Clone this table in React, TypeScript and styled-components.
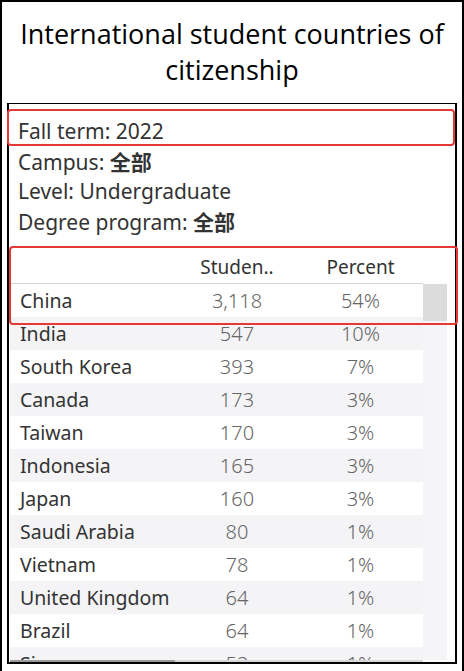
import React from "react";
import styled, { createGlobalStyle } from "styled-components";

const GlobalStyle = createGlobalStyle`
  html, body {
    margin: 0;
    padding: 0;
    background: #fff;
  }
  body {
    font-family: "Noto Sans", "Noto Sans CJK SC", sans-serif;
  }
`;

const Frame = styled.div`
  width: 464px;
  height: 671px;
  box-sizing: border-box;
  border-top: 2px solid #000;
  border-left: 2px solid #000;
  border-right: 2px solid #000;
  padding: 14px 5px 0 5px;
  overflow: hidden;
`;

const Title = styled.h1`
  margin: 0 0 15px;
  font-family: "Open Sans", sans-serif;
  font-weight: 400;
  font-size: 27px;
  line-height: 36px;
  text-align: center;
  color: #000;
`;

const Panel = styled.div`
  position: relative;
  width: 450px;
  height: 561px;
  box-sizing: border-box;
  border: 1px solid #000;
  border-width: 1px 2px 2px 2px;
  display: flex;
  flex-direction: column;
`;

const Filters = styled.div`
  padding: 12px 0 0 9px;
  color: #333;
  font-size: 21px;
`;

const FilterLine = styled.div`
  height: 30px;
  line-height: 30px;
  white-space: nowrap;

  b {
    font-weight: 700;
    font-family: "Noto Sans CJK SC", sans-serif;
  }
`;

const TableArea = styled.div`
  margin-top: 14px;
  display: grid;
  grid-template-columns: 413px 24px;
  flex: 1;
  min-height: 0;
  padding-left: 1px;
`;

const TableMain = styled.div`
  display: flex;
  flex-direction: column;
  min-height: 0;
  overflow: hidden;
`;

const Cols = styled.div<{ $striped?: boolean }>`
  display: grid;
  grid-template-columns: 166px 122px 1fr;
  height: 33px;
  align-items: center;
  flex-shrink: 0;
  background: ${p => (p.$striped ? "#f4f4f6" : "#fff")};
`;

const HeaderRow = styled(Cols)`
  border-bottom: 1px solid #d4d4d4;
  color: #333;
`;

const Rows = styled.div`
  flex: 1;
  min-height: 0;
  overflow: hidden;
`;

const Name = styled.div`
  padding-left: 10px;
  color: #333;
  font-size: 19.5px;
  white-space: nowrap;
`;

const Num = styled.div<{ $head?: boolean }>`
  text-align: center;
  white-space: nowrap;
  font-size: ${p => (p.$head ? "19px" : "20px")};
  font-weight: ${p => (p.$head ? 400 : 300)};
  color: ${p => (p.$head ? "#333" : "#666")};
`;

const HScroll = styled.div`
  height: 2px;
  flex-shrink: 0;
  background: #d6d6d6;
  display: flex;
`;

const HThumb = styled.div`
  width: 165px;
  background: #9a9a9a;
`;

const VScroll = styled.div`
  margin-top: 34px;
  margin-bottom: 2px;
  background: #f5f4f7;
`;

const VThumb = styled.div`
  height: 37px;
  background: #dcdcdc;
`;

const Highlight = styled.div`
  position: absolute;
  border: 2px solid #e53935;
  border-radius: 4px;
  box-sizing: border-box;
  pointer-events: none;
`;

const rows: [string, string, string][] = [
  ["China", "3,118", "54%"],
  ["India", "547", "10%"],
  ["South Korea", "393", "7%"],
  ["Canada", "173", "3%"],
  ["Taiwan", "170", "3%"],
  ["Indonesia", "165", "3%"],
  ["Japan", "160", "3%"],
  ["Saudi Arabia", "80", "1%"],
  ["Vietnam", "78", "1%"],
  ["United Kingdom", "64", "1%"],
  ["Brazil", "64", "1%"],
  ["Singapore", "53", "1%"],
];

export default function App() {
  return (
    <>
      <GlobalStyle />
      <Frame>
        <Title>International student countries of citizenship</Title>
        <Panel>
          <Filters>
            <FilterLine>Fall term: 2022</FilterLine>
            <FilterLine>Campus: <b>全部</b></FilterLine>
            <FilterLine>Level: Undergraduate</FilterLine>
            <FilterLine>Degree program: <b>全部</b></FilterLine>
          </Filters>
          <TableArea>
            <TableMain>
              <HeaderRow>
                <span />
                <Num $head>Studen..</Num>
                <Num $head>Percent</Num>
              </HeaderRow>
              <Rows>
                {rows.map(([name, count, pct], i) => (
                  <Cols key={name} $striped={i % 2 === 1}>
                    <Name>{name}</Name>
                    <Num>{count}</Num>
                    <Num>{pct}</Num>
                  </Cols>
                ))}
              </Rows>
              <HScroll>
                <HThumb />
              </HScroll>
            </TableMain>
            <VScroll>
              <VThumb />
            </VScroll>
          </TableArea>
          <Highlight style={{ left: -2, top: 5, width: 448, height: 37 }} />
          <Highlight style={{ left: 0, top: 142, width: 449, height: 79 }} />
        </Panel>
      </Frame>
    </>
  );
}
